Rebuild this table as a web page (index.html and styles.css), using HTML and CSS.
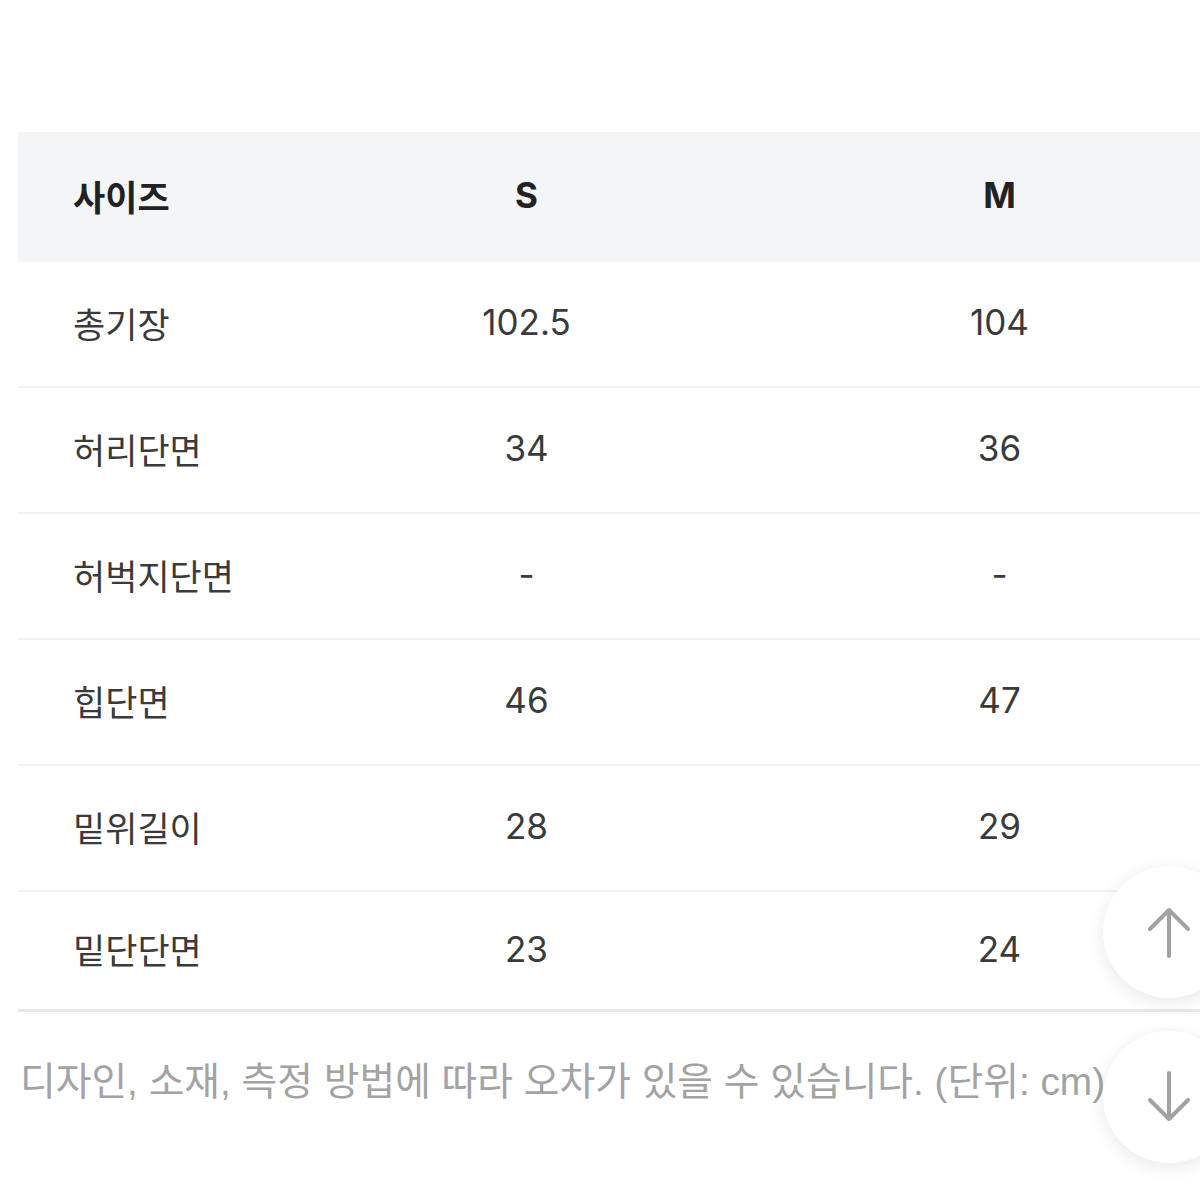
FILE: index.html
```html
<!DOCTYPE html>
<html lang="ko">
<head>
<meta charset="utf-8">
<title>사이즈</title>
<link rel="stylesheet" href="styles.css">
</head>
<body>
<main class="page">
  <table class="size-table">
    <colgroup>
      <col class="c-label">
      <col class="c-val">
      <col class="c-val">
    </colgroup>
    <thead>
      <tr><th class="label">사이즈</th><th>S</th><th>M</th></tr>
    </thead>
    <tbody>
      <tr><td class="label">총기장</td><td>102.5</td><td>104</td></tr>
      <tr><td class="label">허리단면</td><td>34</td><td>36</td></tr>
      <tr><td class="label">허벅지단면</td><td>-</td><td>-</td></tr>
      <tr><td class="label">힙단면</td><td>46</td><td>47</td></tr>
      <tr><td class="label">밑위길이</td><td>28</td><td>29</td></tr>
      <tr class="last"><td class="label">밑단단면</td><td>23</td><td>24</td></tr>
    </tbody>
  </table>
  <p class="note">디자인, 소재, 측정 방법에 따라 오차가 있을 수 있습니다. (단위: cm)</p>
</main>
<button class="fab fab-up" aria-label="위로">
  <svg width="44" height="52" viewBox="0 0 44 52"><path d="M22 50V4M3 23L22 4L41 23" fill="none" stroke="#a2a2a2" stroke-width="4" stroke-linecap="round" stroke-linejoin="round"/></svg>
</button>
<button class="fab fab-down" aria-label="아래로">
  <svg width="44" height="52" viewBox="0 0 44 52"><path d="M22 2V48M3 29L22 48L41 29" fill="none" stroke="#a2a2a2" stroke-width="4" stroke-linecap="round" stroke-linejoin="round"/></svg>
</button>
</body>
</html>
```
FILE: styles.css
```css
html, body {
  margin: 0;
  padding: 0;
  background: #ffffff;
  overflow: hidden;
  width: 1200px;
  height: 1200px;
}
body {
  font-family: Inter, "Noto Sans CJK KR", sans-serif;
  color: #333333;
}
.page {
  padding: 132px 0 0 18px;
}
.size-table {
  border-collapse: collapse;
  width: 1218px;
  table-layout: fixed;
  font-size: 35px;
}
.c-label { width: 272px; }
.c-val { width: 473px; }
.size-table th {
  background: #f4f5f7;
  height: 126px;
  padding: 0 0 4px 0;
  font-weight: 700;
  color: #222222;
  text-align: center;
  vertical-align: middle;
}
.size-table td {
  height: 120px;
  padding: 0 0 4px 0;
  text-align: center;
  vertical-align: middle;
  border-bottom: 2px solid #f1f1f1;
  color: #3a3a3a;
}
.size-table .label {
  text-align: left;
  padding-left: 55px;
}
.size-table tr.last td {
  height: 113px;
  border-bottom: 3px solid #e8e8e8;
}
.note {
  margin: 47px 0 0 2px;
  font-family: "Liberation Sans", "Noto Sans CJK KR", sans-serif;
  font-size: 38.8px;
  color: #a3a3a3;
  line-height: 46px;
  white-space: nowrap;
}
.fab {
  position: absolute;
  left: 1103px;
  width: 132px;
  height: 132px;
  border-radius: 50%;
  border: none;
  background: #ffffff;
  box-shadow: 0 4px 18px rgba(0, 0, 0, 0.09);
  padding: 0;
  margin: 0;
  display: flex;
  align-items: center;
  justify-content: center;
}
.fab svg { display: block; }
.fab-up { top: 866px; }
.fab-down { top: 1031px; }
```
